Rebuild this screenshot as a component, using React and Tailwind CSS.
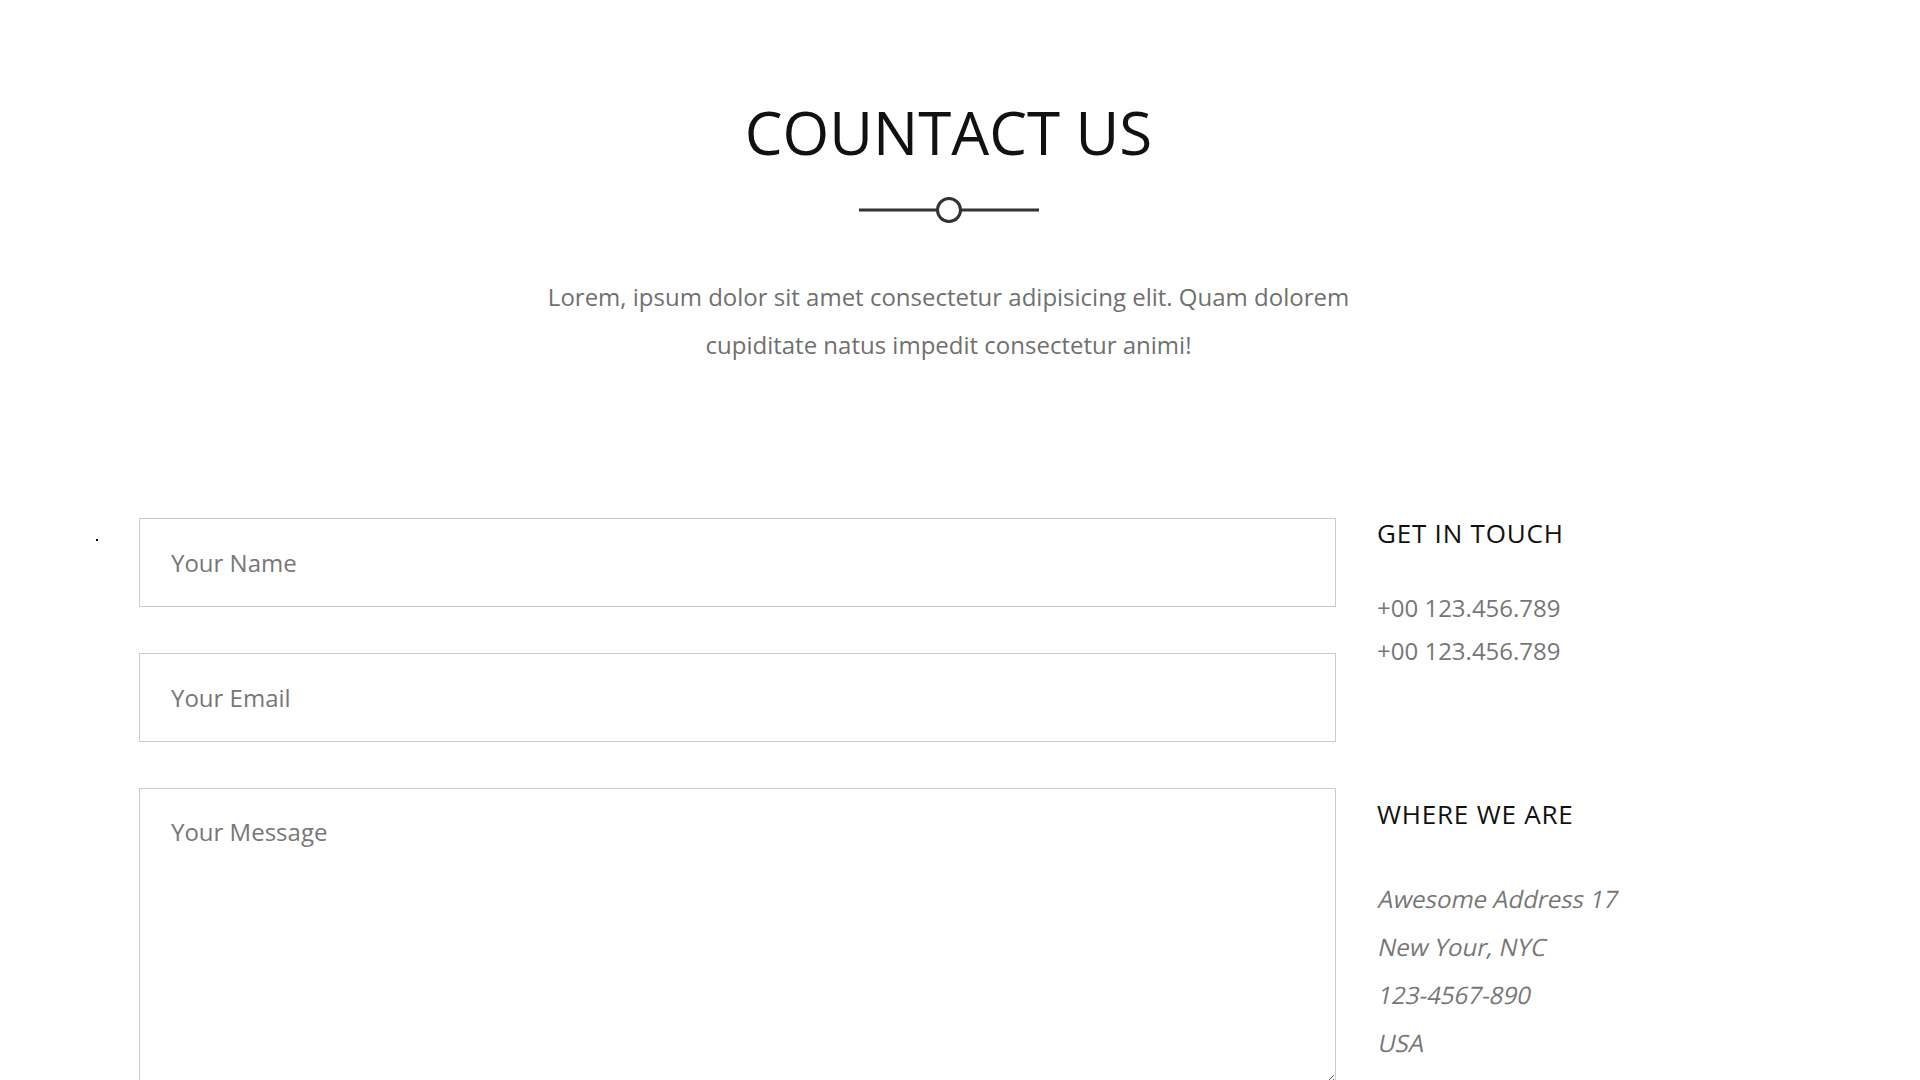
import React from "react";

const Divider = () => (
  <svg width="180" height="28" viewBox="0 0 180 28" className="block">
    <line x1="0" y1="14" x2="78" y2="14" stroke="#333" strokeWidth="3" />
    <circle cx="90" cy="14" r="11.5" fill="white" stroke="#333" strokeWidth="3" />
    <line x1="102" y1="14" x2="180" y2="14" stroke="#333" strokeWidth="3" />
  </svg>
);

const inputClass =
  "block w-full h-[89px] border border-[#cccccc] bg-white pl-[31px] pr-4 text-[24px] text-[#555] placeholder:text-[#777] outline-none font-['Open_Sans',sans-serif]";

const addressLine = "inline-block origin-[0_33px] -skew-x-12";

export default function App() {
  return (
    <div className="min-h-screen bg-white font-['Open_Sans',sans-serif] pb-[120px]">
      {/* Heading */}
      <section className="flex flex-col items-center pt-[96px] pr-[23px]">
        <h1 className="text-[60px] leading-[72px] font-normal text-[#111]">COUNTACT US</h1>
        <div className="mt-[28px]">
          <Divider />
        </div>
        <p className="mt-[49px] w-[840px] text-center text-[24px] leading-[48px] text-[#707070]">
          Lorem, ipsum dolor sit amet consectetur adipisicing elit. Quam dolorem cupiditate natus impedit consectetur animi!
        </p>
      </section>

      {/* Form and contact info */}
      <section className="mt-[149px] flex pl-[96px]">
        <div className="mt-[21px] h-[2px] w-[2px] bg-black" />
        <form className="ml-[41px] flex w-[1197px] flex-col gap-[46px]">
          <input type="text" placeholder="Your Name" className={inputClass} />
          <input type="email" placeholder="Your Email" className={inputClass} />
          <textarea
            placeholder="Your Message"
            className="block w-full h-[296px] border border-[#cccccc] bg-white pl-[31px] pr-4 pt-[26px] text-[24px] leading-[33px] text-[#555] placeholder:text-[#777] outline-none font-['Open_Sans',sans-serif]"
          />
        </form>

        <div className="ml-[41px] flex flex-col">
          <h3 className="text-[26px] leading-[30px] font-medium tracking-[0.8px] text-[#111]">GET IN TOUCH</h3>
          <div className="mt-[38px] flex flex-col text-[24px] leading-[43px] text-[#777]">
            <span>+00 123.456.789</span>
            <span>+00 123.456.789</span>
          </div>

          <h3 className="mt-[127px] text-[26px] leading-[30px] font-medium tracking-[0.8px] text-[#111]">WHERE WE ARE</h3>
          <div className="mt-[46px] flex flex-col items-start text-[24px] leading-[48px] text-[#777]">
            <span className={addressLine}>Awesome Address 17</span>
            <span className={addressLine}>New Your, NYC</span>
            <span className={addressLine}>123-4567-890</span>
            <span className={addressLine}>USA</span>
          </div>
        </div>
      </section>
    </div>
  );
}
